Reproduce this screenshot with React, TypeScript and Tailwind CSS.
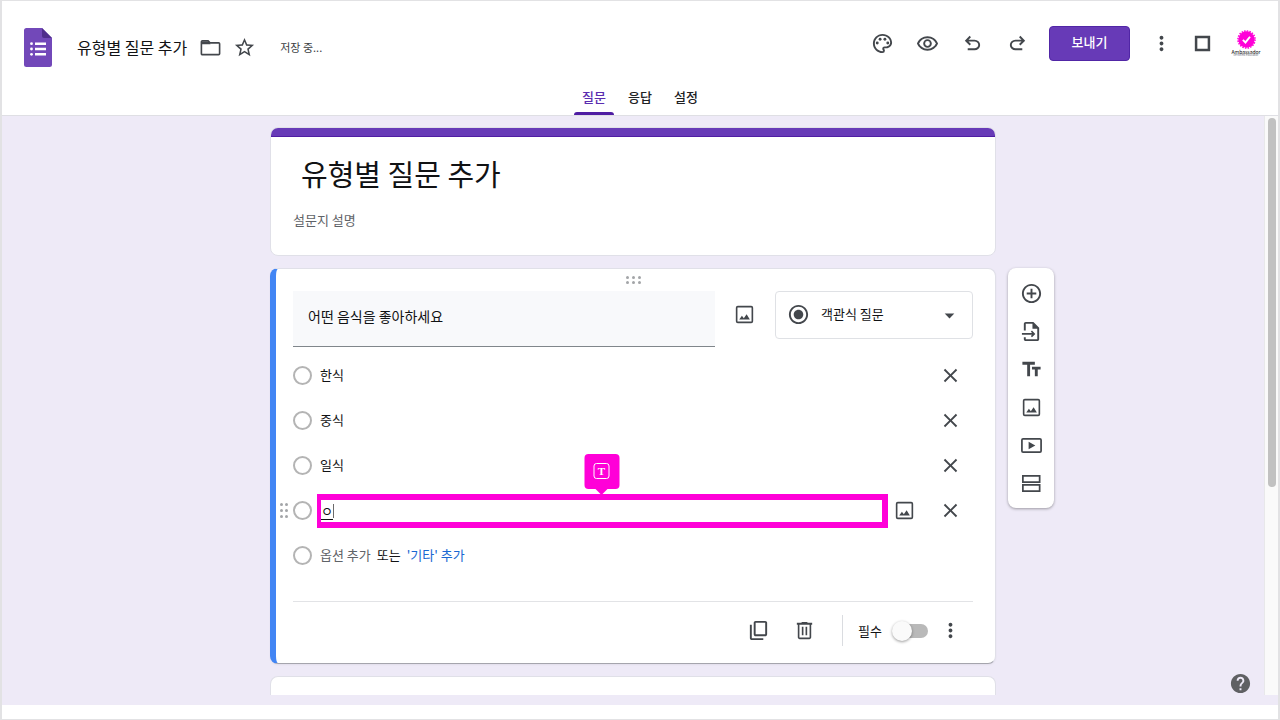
import { useState } from 'react'
import type { ReactNode } from 'react'
import {
  MdAddCircleOutline,
  MdArrowDropDown,
  MdClose,
  MdHelp,
  MdMoreVert,
  MdOutlinePalette,
  MdOutlineRemoveRedEye,
  MdRadioButtonChecked,
  MdStarBorder,
  MdTextFields,
} from 'react-icons/md'

const tabs = ['질문', '응답', '설정']

const initialOptions = ['한식', '중식', '일식']

function Svg({ children }: { children: ReactNode }) {
  return (
    <svg viewBox="0 0 24 24" className="size-[23px]" fill="currentColor" aria-hidden="true">
      {children}
    </svg>
  )
}

function UndoIcon() {
  return (
    <Svg>
      <path d="M7 19v-2h7.1q1.575 0 2.738-1T18 13.5T16.838 11T14.1 10H7.8l2.6 2.6L9 14L4 9l5-5l1.4 1.4L7.8 8h6.3q2.425 0 4.163 1.575T20 13.5t-1.737 3.925T14.1 19z" />
    </Svg>
  )
}

function RedoIcon() {
  return (
    <Svg>
      <path d="M9.9 19q-2.425 0-4.163-1.575T4 13.5t1.738-3.925T9.9 8h6.3l-2.6-2.6L15 4l5 5l-5 5l-1.4-1.4l2.6-2.6H9.9q-1.575 0-2.738 1T6 13.5T7.163 16T9.9 17H17v2z" />
    </Svg>
  )
}

function FolderIcon() {
  return (
    <Svg>
      <path d="M3.500 5h6l2 2.200h9a1 1 0 0 1 1 1v10.300a1 1 0 0 1-1 1h-17a1 1 0 0 1-1-1V6a1 1 0 0 1 1-1z" fill="none" stroke="currentColor" strokeWidth="1.700" />
      <path d="M2.500 5.500h8l1.500 3H2.500z" />
    </Svg>
  )
}

function ImageIcon() {
  return (
    <Svg>
      <rect x="3.800" y="3.800" width="16.400" height="16.400" rx="1.200" fill="none" stroke="currentColor" strokeWidth="1.700" />
      <path d="M6.500 17.300l2.800-4 2 2.500 2.900-4 3.400 5.500z" />
    </Svg>
  )
}

function ImportIcon() {
  return (
    <Svg>
      <path d="M14 2H6c-1.100 0-2 .9-2 2v7h2V4h7v5h5v11H6v-2H4v2c0 1.100.9 2 2 2h12c1.100 0 2-.9 2-2V8l-6-6z" />
      <path d="M12.500 11l3.500 3.500-3.500 3.500-1.200-1.200 1.400-1.400H2v-1.800h10.700l-1.400-1.400z" />
    </Svg>
  )
}

function VideoIcon() {
  return (
    <Svg>
      <rect x="2" y="5" width="20" height="14" rx="1.200" fill="none" stroke="currentColor" strokeWidth="1.800" />
      <path d="M9 8v8l7-4z" />
    </Svg>
  )
}

function SectionIcon() {
  return (
    <Svg>
      <path d="M3 4h17.500v6.500H3zM3 13.500h17.500V20H3z" fill="none" stroke="currentColor" strokeWidth="1.800" />
    </Svg>
  )
}

function CopyIcon() {
  return (
    <Svg>
      <path d="M9 18q-.825 0-1.413-.588T7 16V4q0-.825.588-1.413T9 2h10q.825 0 1.413.588T21 4v12q0 .825-.588 1.413T19 18H9Zm0-2h10V4H9v12Zm-4 6q-.825 0-1.413-.588T3 20V6h2v14h12v2H5Z" />
    </Svg>
  )
}

function TrashIcon() {
  return (
    <Svg>
      <path d="M15 4V3H9v1H4v2h1v13c0 1.100.9 2 2 2h10c1.100 0 2-.9 2-2V6h1V4h-5zm2.300 15.300H6.700V6h10.600v13.300z" />
      <path d="M9.200 8h1.700v9H9.200zM13.100 8h1.700v9h-1.700z" />
    </Svg>
  )
}

function SquareIcon() {
  return (
    <Svg>
      <path d="M4 4v16h16V4H4zm13.400 13.400H6.600V6.600h10.800v10.800z" />
    </Svg>
  )
}

function FormsLogo() {
  return (
    <svg viewBox="0 0 28 39" className="h-[39px] w-7" aria-hidden="true">
      <path d="M2.500 0H18l10 10v26.500a2.500 2.500 0 0 1-2.500 2.500h-23A2.500 2.500 0 0 1 0 36.500v-34A2.500 2.500 0 0 1 2.500 0z" fill="#7248b9" />
      <path d="M18 0l10 10H20a2 2 0 0 1-2-2z" fill="#4f2d8c" />
      <g fill="#fff">
        <circle cx="7.500" cy="15.700" r="1.400" />
        <circle cx="7.500" cy="21" r="1.400" />
        <circle cx="7.500" cy="26.300" r="1.400" />
        <path d="M11 14.400h11v2.500H11zM11 19.700h11v2.500H11zM11 25h11v2.500H11z" />
      </g>
    </svg>
  )
}

function Avatar() {
  return (
    <button type="button" className="flex w-7 flex-col items-center">
      <svg viewBox="0 0 20 20" className="size-[19px]" aria-hidden="true">
        <circle cx="10" cy="10" r="8.600" fill="#ff00d8" />
        <circle cx="10" cy="10" r="9" fill="none" stroke="#ff00d8" strokeWidth="1.600" strokeDasharray="1.600 1.227" />
        <path d="M6.200 10.300l2.700 2.800 4.800-6" fill="none" stroke="#fff" strokeWidth="2" />
      </svg>
      <span className="text-[5px] leading-[5px] text-black">Ambassador</span>
      <span className="text-[3px] leading-[3px] text-gray-500">certified educator</span>
    </button>
  )
}

function DragDots({ vertical = false }: { vertical?: boolean }) {
  return (
    <span className={vertical ? 'grid grid-cols-2 gap-x-0.5 gap-y-[3px]' : 'grid grid-cols-3 gap-x-[3px] gap-y-0.5'}>
      {[0, 1, 2, 3, 4, 5].map((dot) => (
        <span key={dot} className="size-[3px] rounded-full bg-[#a3a5a8]" />
      ))}
    </span>
  )
}

function IconButton({ label, children }: { label: string; children: ReactNode }) {
  return (
    <button type="button" aria-label={label} className="flex size-[23px] shrink-0 items-center justify-center text-[#43474c]">
      {children}
    </button>
  )
}

function OptionCircle() {
  return <span className="size-[19px] shrink-0 rounded-full border-2 border-[#b4b4b4]" />
}

const tools = [
  { name: '질문 추가', icon: <MdAddCircleOutline size={23} /> },
  { name: '질문 가져오기', icon: <ImportIcon /> },
  { name: '제목 및 설명 추가', icon: <MdTextFields size={23} /> },
  { name: '이미지 추가', icon: <ImageIcon /> },
  { name: '동영상 추가', icon: <VideoIcon /> },
  { name: '섹션 추가', icon: <SectionIcon /> },
]

export default function App() {
  const [activeTab, setActiveTab] = useState('질문')
  const [required, setRequired] = useState(false)

  return (
    <div className="flex min-h-screen flex-col border border-x-2 border-[#e2e2e4] bg-white pb-3.5 font-['Noto_Sans_CJK_KR',sans-serif] text-[13px] leading-5 text-[#111214]">
      {/* Header */}
      <header className="border-b border-[#dfdfe4]">
        <div className="flex h-[84px] items-center justify-between pr-[18px] pl-[22px]">
          <div className="flex items-center pt-2">
            <FormsLogo />
            <h1 className="ml-[25px] text-base">유형별 질문 추가</h1>
            <div className="ml-3 flex gap-[11px]">
              <IconButton label="폴더로 이동">
                <FolderIcon />
              </IconButton>
              <IconButton label="별표">
                <MdStarBorder size={23} />
              </IconButton>
            </div>
            <span className="ml-6 text-[11px] text-[#3c4043]">저장 중...</span>
          </div>

          <div className="flex items-center gap-5">
            <div className="flex gap-[22px]">
              <IconButton label="테마 맞춤설정">
                <MdOutlinePalette size={23} />
              </IconButton>
              <IconButton label="미리보기">
                <MdOutlineRemoveRedEye size={23} />
              </IconButton>
              <IconButton label="실행취소">
                <UndoIcon />
              </IconButton>
              <IconButton label="재실행">
                <RedoIcon />
              </IconButton>
            </div>
            <button
              type="button"
              className="h-[35px] w-[81px] rounded border border-[#5126a6] bg-[#673ab7] pb-0.5 font-medium text-white"
            >
              보내기
            </button>
            <div className="flex items-center gap-[18px]">
              <IconButton label="더보기">
                <MdMoreVert size={23} />
              </IconButton>
              <IconButton label="앱">
                <SquareIcon />
              </IconButton>
              <Avatar />
            </div>
          </div>
        </div>

        {/* Tabs */}
        <nav className="flex justify-center gap-1.5">
          {tabs.map((tab) => (
            <button
              key={tab}
              type="button"
              onClick={() => setActiveTab(tab)}
              className={`relative flex h-[30px] justify-center px-2 pt-0.5 font-medium ${
                activeTab === tab ? 'text-[#5b2db0]' : 'text-[#202124]'
              }`}
            >
              {tab}
              {activeTab === tab && (
                <span className="absolute inset-x-0 bottom-0 h-[3px] rounded-t bg-[#4f1da3]" />
              )}
            </button>
          ))}
        </nav>
      </header>

      <main className="relative flex flex-1 bg-[#eeeaf7] pb-2.5">
        <div className="grid flex-1 grid-cols-[1fr_minmax(0,726px)_1fr] gap-x-3 pt-[11px]">
          <div className="col-start-2 flex flex-col gap-3">
            {/* Form title */}
            <section className="h-[129px] overflow-hidden rounded-lg border border-[#e0e0e8] bg-white">
              <div className="h-[9px] border-b border-[#4f1da3] bg-[#673ab7]" />
              <div className="flex flex-col px-[22px] pt-3">
                <input
                  aria-label="설문지 제목"
                  defaultValue="유형별 질문 추가"
                  className="h-12 w-full px-2 text-[29px] outline-none"
                />
                <input
                  aria-label="설문지 설명"
                  placeholder="설문지 설명"
                  className="mt-2.5 h-6 w-full outline-none placeholder:text-[#5f6368]"
                />
              </div>
            </section>

            {/* Question */}
            <section className="rounded-lg border border-l-[6px] border-[#e0e0e8] border-b-[#a5a5ad] border-l-[#4285f4] bg-white pr-[22px] pb-[17px] pl-[17px] shadow-xs">
              <div className="flex h-[22px] items-center justify-center">
                <DragDots />
              </div>

              <div className="flex items-start">
                <input
                  aria-label="질문"
                  defaultValue="어떤 음식을 좋아하세요"
                  className="h-14 min-w-0 flex-1 border-b border-[#80868b] bg-[#f8f9fb] px-[15px] pb-1.5 text-sm outline-none"
                />
                <div className="ml-[18px] flex h-[46px] items-center">
                  <IconButton label="이미지 추가">
                    <ImageIcon />
                  </IconButton>
                </div>
                <div className="relative ml-[19px] w-[198px] text-[#43474c]">
                  <select
                    aria-label="질문 유형"
                    className="h-12 w-full appearance-none rounded border border-[#dfe1e5] bg-white pb-0.5 pl-[45px] text-[#111214] outline-none"
                  >
                    <option>객관식 질문</option>
                  </select>
                  <span className="pointer-events-none absolute inset-y-0 left-3 flex items-center pb-0.5">
                    <MdRadioButtonChecked size={23} />
                  </span>
                  <span className="pointer-events-none absolute inset-y-0 right-3 flex items-center">
                    <MdArrowDropDown size={23} />
                  </span>
                </div>
              </div>

              <ul className="mt-1.5">
                {initialOptions.map((option) => (
                  <li key={option} className="flex h-[45px] items-center pr-[11px]">
                    <OptionCircle />
                    <input
                      aria-label={option}
                      defaultValue={option}
                      className="ml-2 min-w-0 flex-1 pb-0.5 outline-none"
                    />
                    <IconButton label="옵션 삭제">
                      <MdClose size={23} />
                    </IconButton>
                  </li>
                ))}

                {/* Option being typed */}
                <li className="relative flex h-[45px] items-center pr-[11px]">
                  <span className="absolute -left-[13px]">
                    <DragDots vertical />
                  </span>
                  <OptionCircle />
                  <div className="relative ml-[5px] flex min-w-0 flex-1 border-y-[6px] border-r-[6px] border-l-4 border-[#ff00d8]">
                    <input
                      aria-label="옵션 4"
                      defaultValue="ㅇ"
                      className="h-[22px] w-full underline decoration-1 underline-offset-3 outline-none"
                    />
                    {/* Caret */}
                    <span className="absolute inset-y-1 left-3 w-px bg-[#6b6b6b]" />
                    <div className="absolute bottom-full left-1/2 mb-[11px] flex size-[35px] -translate-x-1/2 items-center justify-center rounded bg-[#ff00d8] text-white">
                      <span className="flex size-4 items-center justify-center rounded-[3px] border border-white font-['Liberation_Serif',serif] text-[11px] leading-none font-bold">
                        T
                      </span>
                      <span className="absolute top-full border-x-[6px] border-t-[6px] border-x-transparent border-t-[#ff00d8]" />
                    </div>
                  </div>
                  <div className="mx-[5px] flex">
                    <IconButton label="옵션에 이미지 추가">
                      <ImageIcon />
                    </IconButton>
                  </div>
                  <div className="ml-[18px]">
                    <IconButton label="옵션 삭제">
                      <MdClose size={23} />
                    </IconButton>
                  </div>
                </li>

                <li className="flex h-[45px] items-center">
                  <OptionCircle />
                  <button type="button" className="ml-2 pb-0.5 text-[#5f6368]">
                    옵션 추가
                  </button>
                  <span className="mx-1.5 pb-0.5">또는</span>
                  <button type="button" className="pb-0.5 text-[#1967d2]">
                    '기타' 추가
                  </button>
                </li>
              </ul>

              <div className="mt-[23px] flex items-center justify-end border-t border-[#e2e3e6] pt-[13px] pr-[11px]">
                <IconButton label="복사">
                  <CopyIcon />
                </IconButton>
                <div className="ml-[23px]">
                  <IconButton label="삭제">
                    <TrashIcon />
                  </IconButton>
                </div>
                <label className="ml-[26px] flex h-[31px] cursor-pointer items-center border-l border-[#dadce0] pl-[15px]">
                  필수
                  <input
                    type="checkbox"
                    checked={required}
                    onChange={(e) => setRequired(e.target.checked)}
                    className="peer sr-only"
                  />
                  <span className="relative ml-3.5 h-3.5 w-8 rounded-full bg-[#b9b9b9] before:absolute before:-top-[3px] before:-left-1 before:size-5 before:rounded-full before:bg-[#fafafa] before:shadow-[0_1px_3px_rgba(0,0,0,0.4)] peer-checked:bg-[#b39ddb] peer-checked:before:left-4" />
                </label>
                <div className="ml-[11px]">
                  <IconButton label="더보기">
                    <MdMoreVert size={23} />
                  </IconButton>
                </div>
              </div>
            </section>

            <section className="flex-1 rounded-t-lg border border-b-0 border-[#e0e0e8] bg-white" />
          </div>

          {/* Floating toolbar */}
          <aside className="mt-[141px] flex w-[46px] flex-col self-start rounded-lg bg-white py-1.5 shadow-[0_1px_3px_rgba(0,0,0,0.35)]">
            {tools.map((tool) => (
              <button
                key={tool.name}
                type="button"
                aria-label={tool.name}
                className="flex h-[38px] items-center justify-center text-[#43474c]"
              >
                {tool.icon}
              </button>
            ))}
          </aside>
        </div>

        {/* Scrollbar */}
        <div className="w-3.5 border-l border-[#e8e8ea] bg-[#fafafa] pt-0.5 pl-[3px]">
          <div className="h-[64%] w-2 rounded-full bg-[#c1c1c1]" />
        </div>

        <button type="button" aria-label="도움말" className="absolute right-[26px] bottom-2.5 text-[#5f6063]">
          <MdHelp size={23} />
        </button>
      </main>
    </div>
  )
}
